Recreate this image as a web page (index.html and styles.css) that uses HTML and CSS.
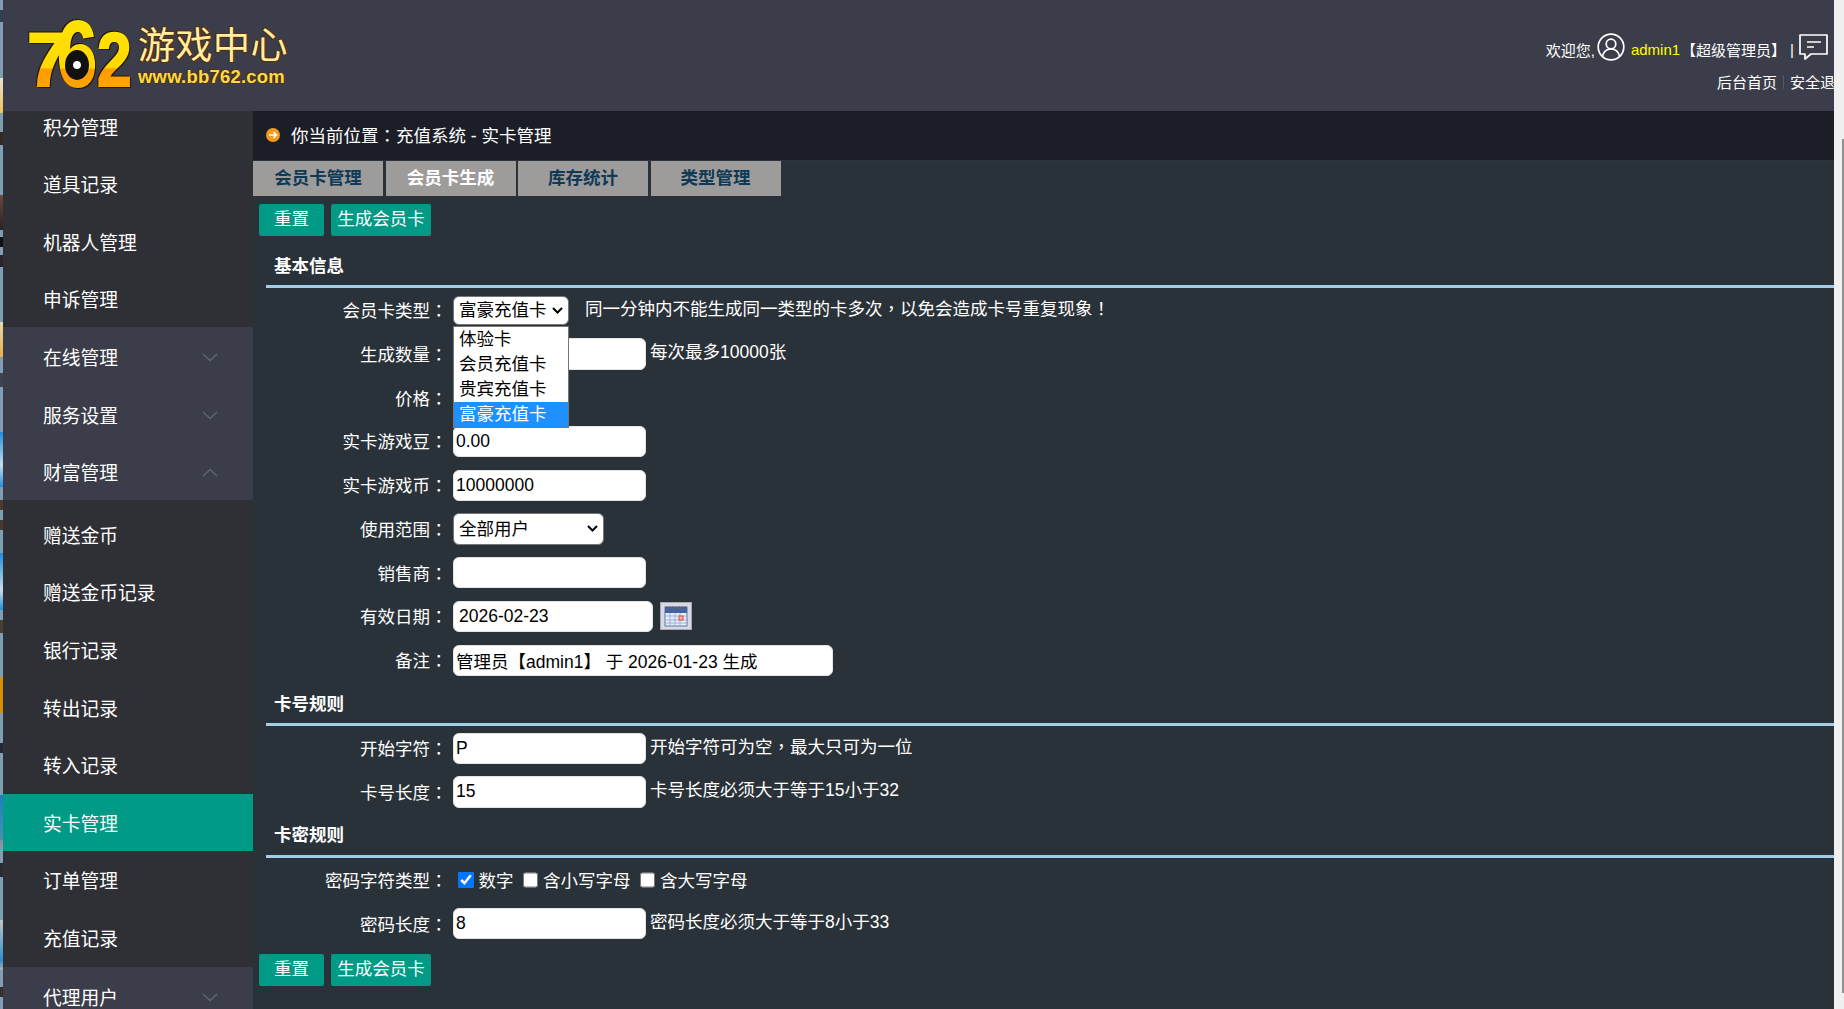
FILE: index.html
```html
<!doctype html>
<html lang="zh-CN">
<head>
    <meta charset="UTF-8">
    <title>实卡管理</title>
    <link rel="stylesheet" href="styles.css">
</head>
<body>
<div class="page">
  <div class="strip"></div>
  <div class="frame">
    <header class="top">
      <div class="logo">
        <div class="logo-num">
          <span class="dig dig-7">7</span><span class="dig dig-6">6</span><span class="dig dig-2">2</span>
          <span class="logo-eye"></span>
        </div>
        <div class="logo-name">
          <div class="logo-cn">游戏中心</div>
          <div class="logo-url">www.bb762.com</div>
        </div>
      </div>
      <div class="user">
        <div class="user-line">
          <span>欢迎您,</span>
          <svg class="user-icon" viewBox="0 0 28 28" fill="none" stroke="#fff" stroke-width="1.7"><circle cx="14" cy="14" r="12.8"/><circle cx="14" cy="11" r="4.8"/><path d="M5.5 23.5c1-5 4.500-7.500 8.500-7.500s7.500 2.500 8.500 7.500"/></svg>
          <span class="user-name">admin1</span>
          <span class="user-role">【超级管理员】</span>
          <span class="user-sep">|</span>
          <svg class="msg-icon" viewBox="0 0 29 27" fill="none" stroke="#fff" stroke-width="1.7"><path d="M1 1h27v19H12l-6 5v-5H1z" stroke-linejoin="round"/><path d="M8 8h14M8 13h7"/></svg>
        </div>
        <div class="user-links">
          <a>后台首页</a>
          <i></i>
          <a>安全退出</a>
        </div>
      </div>
    </header>
    <div class="body">
      <nav class="side">
        <ul class="menu">
          <li class="menu-item up">积分管理</li>
          <li class="menu-item up">道具记录</li>
          <li class="menu-item up">机器人管理</li>
          <li class="menu-item up">申诉管理</li>
          <li class="menu-item up group">在线管理<svg class="chev" viewBox="0 0 16 9"><path d="M1 1l7 6.500L15 1"/></svg></li>
          <li class="menu-item up group">服务设置<svg class="chev" viewBox="0 0 16 9"><path d="M1 1l7 6.500L15 1"/></svg></li>
          <li class="menu-item up group">财富管理<svg class="chev" viewBox="0 0 16 9"><path d="M1 8l7-6.500L15 8"/></svg></li>
          <li class="menu-gap"></li>
          <li class="menu-item">赠送金币</li>
          <li class="menu-item">赠送金币记录</li>
          <li class="menu-item">银行记录</li>
          <li class="menu-item">转出记录</li>
          <li class="menu-item">转入记录</li>
          <li class="menu-item active">实卡管理</li>
          <li class="menu-item">订单管理</li>
          <li class="menu-item">充值记录</li>
          <li class="menu-item up group">代理用户<svg class="chev" viewBox="0 0 16 9"><path d="M1 1l7 6.500L15 1"/></svg></li>
        </ul>
      </nav>
      <main class="main">
        <div class="crumb">
          <svg class="crumb-icon" viewBox="0 0 14 14"><circle cx="7" cy="7" r="7" fill="#f39a1c"/><path d="M3 7h7M7.500 4l3 3-3 3" fill="none" stroke="#fff" stroke-width="1.600"/></svg>
          <span>你当前位置<span class="tw" lang="zh-TW">：</span>充值系统 - 实卡管理</span>
        </div>
        <div class="tabs">
          <a class="tab">会员卡管理</a>
          <a class="tab current">会员卡生成</a>
          <a class="tab">库存统计</a>
          <a class="tab">类型管理</a>
        </div>
        <div class="btns">
          <a class="btn btn-reset">重置</a>
          <a class="btn btn-make">生成会员卡</a>
        </div>

        <h3 class="title title-first">基本信息</h3>
        <div class="row">
          <label class="lab">会员卡类型<span class="tw" lang="zh-TW">：</span></label>
          <div class="pick">
            <select class="sel sel-card"><option>富豪充值卡</option></select>
            <ul class="drop">
              <li>体验卡</li>
              <li>会员充值卡</li>
              <li>贵宾充值卡</li>
              <li class="on">富豪充值卡</li>
            </ul>
          </div>
          <span class="hint hint-far">同一分钟内不能生成同一类型的卡多次<span class="tw" lang="zh-TW">，</span>以免会造成卡号重复现象<span class="tw" lang="zh-TW">！</span></span>
        </div>
        <div class="row">
          <label class="lab">生成数量<span class="tw" lang="zh-TW">：</span></label>
          <input class="txt" type="text">
          <span class="hint">每次最多10000张</span>
        </div>
        <div class="row">
          <label class="lab">价格<span class="tw" lang="zh-TW">：</span></label>
        </div>
        <div class="row">
          <label class="lab">实卡游戏豆<span class="tw" lang="zh-TW">：</span></label>
          <input class="txt" type="text" value="0.00">
        </div>
        <div class="row">
          <label class="lab">实卡游戏币<span class="tw" lang="zh-TW">：</span></label>
          <input class="txt" type="text" value="10000000">
        </div>
        <div class="row">
          <label class="lab">使用范围<span class="tw" lang="zh-TW">：</span></label>
          <select class="sel sel-range"><option>全部用户</option></select>
        </div>
        <div class="row">
          <label class="lab">销售商<span class="tw" lang="zh-TW">：</span></label>
          <input class="txt" type="text">
        </div>
        <div class="row">
          <label class="lab">有效日期<span class="tw" lang="zh-TW">：</span></label>
          <input class="txt txt-date" type="text" value="2026-02-23">
          <span class="cal">
            <svg viewBox="0 0 24 22" width="24" height="22"><rect x="1" y="2" width="22" height="19" fill="#e8eefa" stroke="#5d78a8"/><rect x="1" y="2" width="22" height="6" fill="#45639c"/><path d="M3 1v3M6 1v3M9 1v3M12 1v3M15 1v3M18 1v3M21 1v3" stroke="#666"/><path d="M1 11h22M1 15h22M1 18h22M6 8v13M11 8v13M16 8v13" stroke="#9cb1d6"/><rect x="15" y="11" width="4" height="4" fill="#f4b9a4" stroke="#d9533a"/></svg>
          </span>
        </div>
        <div class="row">
          <label class="lab">备注<span class="tw" lang="zh-TW">：</span></label>
          <input class="txt txt-note" type="text" value="管理员【admin1】 于 2026-01-23 生成">
        </div>

        <h3 class="title">卡号规则</h3>
        <div class="row">
          <label class="lab">开始字符<span class="tw" lang="zh-TW">：</span></label>
          <input class="txt" type="text" value="P">
          <span class="hint">开始字符可为空<span class="tw" lang="zh-TW">，</span>最大只可为一位</span>
        </div>
        <div class="row">
          <label class="lab">卡号长度<span class="tw" lang="zh-TW">：</span></label>
          <input class="txt" type="text" value="15">
          <span class="hint">卡号长度必须大于等于15小于32</span>
        </div>

        <h3 class="title">卡密规则</h3>
        <div class="row">
          <label class="lab">密码字符类型<span class="tw" lang="zh-TW">：</span></label>
          <div class="checks">
            <label class="chk"><input type="checkbox" checked>数字</label>
            <label class="chk"><input type="checkbox">含小写字母</label>
            <label class="chk"><input type="checkbox">含大写字母</label>
          </div>
        </div>
        <div class="row">
          <label class="lab">密码长度<span class="tw" lang="zh-TW">：</span></label>
          <input class="txt" type="text" value="8">
          <span class="hint">密码长度必须大于等于8小于33</span>
        </div>
        <div class="btns btns-end">
          <a class="btn btn-reset">重置</a>
          <a class="btn btn-make">生成会员卡</a>
        </div>
      </main>
    </div>
  </div>
  <div class="scroll"><div class="scroll-thumb"></div></div>
</div>
</body>
</html>
```

FILE: styles.css
```css
* {
  box-sizing: border-box;
}
html, body {
  margin: 0;
  height: 1009px;
  overflow: hidden;
}
body {
  font-family: "Liberation Sans", "Noto Sans CJK SC", sans-serif;
  font-size: 17.5px;
  color: #fff;
  background: #2a3239;
}
ul {
  margin: 0;
  padding: 0;
  list-style: none;
}
.page {
  display: flex;
  height: 1009px;
}
.strip {
  width: 3px;
  flex: none;
  background: linear-gradient(to bottom,
    #7f9db5 0, #7f9db5 10px, #30404f 10px, #30404f 22px, #7f9db5 22px, #7f9db5 78px,
    #e9e3cf 78px, #efc25a 113px, #7f9db5 113px, #7f9db5 132px, #33291f 132px, #33291f 145px,
    #7f9db5 145px, #7f9db5 195px, #6b4a3c 195px, #2a2020 230px, #7f9db5 230px, #7f9db5 237px,
    #111 237px, #111 247px, #7f9db5 247px, #7f9db5 255px, #2b2430 255px, #2b2430 267px,
    #7f9db5 267px, #7f9db5 322px, #e9d9a8 322px, #e5b04a 357px, #7f9db5 357px, #7f9db5 373px,
    #3d4450 373px, #3d4450 387px, #7f9db5 387px, #7f9db5 432px, #1a8fe0 432px, #c9dcea 465px,
    #1a8fe0 487px, #7f9db5 487px, #7f9db5 500px, #4a3a2c 500px, #4a3a2c 510px, #7f9db5 510px,
    #7f9db5 520px, #4a3a2c 520px, #4a3a2c 530px, #7f9db5 530px, #7f9db5 553px, #1a8fe0 553px,
    #c9dcea 590px, #1a8fe0 610px, #7f9db5 610px, #7f9db5 620px, #4a4030 620px, #4a4030 633px,
    #7f9db5 633px, #7f9db5 677px, #d99000 677px, #d99000 713px, #7f9db5 713px, #7f9db5 743px,
    #20283a 743px, #20283a 753px, #7f9db5 753px, #7f9db5 795px, #1a7fc0 795px, #4a90b0 840px,
    #8a8f96 840px, #7f9db5 850px, #7f9db5 863px, #2a2a30 863px, #2a2a30 877px, #7f9db5 877px,
    #7f9db5 920px, #c5c5c5 920px, #2a8fd0 960px, #b0b0b0 970px, #7f9db5 970px, #7f9db5 987px,
    #3a3028 987px, #3a3028 997px, #7f9db5 997px);
}
.frame {
  flex: 1;
  min-width: 0;
  display: flex;
  flex-direction: column;
}
.scroll {
  width: 10px;
  flex: none;
  background: #f0f0f0;
  padding-top: 139px;
}
.scroll-thumb {
  width: 2px;
  height: 854px;
  margin-left: 8px;
  background: #8f8f8f;
}

/* top */
.top {
  height: 111px;
  flex: none;
  display: flex;
  justify-content: space-between;
  background: #3b3e4a;
  overflow: hidden;
}
.logo {
  display: flex;
  align-items: flex-start;
  padding: 8px 0 0 24px;
}
.logo-num {
  position: relative;
  display: flex;
  align-items: baseline;
  width: 111px;
  font-family: "Liberation Sans", sans-serif;
  font-weight: bold;
  line-height: 1;
  filter: drop-shadow(1px 1px 0 #221708) drop-shadow(-1px -1px 0 #221708);
}
.dig {
  display: inline-block;
  transform-origin: left center;
  background: linear-gradient(to bottom, #ffe600 0, #ffd800 60%, #ff9c00 62%, #ffab00 100%);
  -webkit-background-clip: text;
  background-clip: text;
  color: transparent;
  -webkit-text-stroke: 2px transparent;
}
.dig-7 {
  font-size: 76px;
  margin-right: -12px;
}
.dig-6 {
  font-size: 92px;
  margin-right: -11px;
  transform: scaleX(.78);
  background-image: linear-gradient(to bottom, #ffe600 0, #ffd800 65%, #ff9c00 67%, #ffab00 100%);
}
.dig-2 {
  font-size: 76px;
  transform: scaleX(.82);
}
.logo-eye {
  position: absolute;
  left: 38px;
  top: 42px;
  width: 24px;
  height: 30px;
  border-radius: 50%;
  background: radial-gradient(circle at 50% 50%, #fff 0, #fff 3.500px, #111 4.500px);
}
.logo-name {
  padding-top: 18px;
}
.logo-cn {
  font-size: 37px;
  line-height: 41px;
  letter-spacing: 0.500px;
  color: #fff0a0;
  text-shadow: 1px 1px 0 #5a2c10, -1px -1px 0 #5a2c10, 1px -1px 0 #5a2c10, -1px 1px 0 #5a2c10;
}
.logo-url {
  font-size: 18.500px;
  font-weight: bold;
  line-height: 20px;
  letter-spacing: 0.200px;
  color: #f5dc45;
  text-shadow: 1px 1px 0 #5a2c10, -1px -1px 0 #5a2c10;
  white-space: nowrap;
}
.user {
  font-size: 15px;
  padding-top: 33px;
  margin-right: 6px;
}
.user-line {
  display: flex;
  align-items: center;
  justify-content: flex-end;
  height: 28px;
  white-space: nowrap;
}
.user-line span {
  padding-top: 4px;
}
.user-icon {
  width: 28px;
  height: 28px;
  margin-left: 2px;
}
.user-name {
  color: #ff0;
  margin-left: 6px;
}
.user-role {
  margin-left: 1px;
}
.user-sep {
  margin-left: 4px;
}
.msg-icon {
  width: 29px;
  height: 27px;
  margin-left: 5px;
}
.user-links {
  display: flex;
  align-items: center;
  justify-content: flex-end;
  margin-top: 10px;
  margin-right: -22px;
  white-space: nowrap;
}
.user-links i {
  width: 1px;
  height: 14px;
  margin: 0 6px;
  background: #555966;
}

/* left menu */
.body {
  flex: 1;
  min-height: 0;
  display: flex;
}
.side {
  width: 250px;
  flex: none;
  overflow: hidden;
  background: #2e3035;
  font-size: 18.750px;
}
.menu {
  margin-top: -14.400px;
}
.menu-item {
  position: relative;
  height: 57.600px;
  line-height: 62px;
  padding-left: 40px;
  white-space: nowrap;
}
.menu-item.up {
  line-height: 64px;
}
.menu-item.group {
  background: #3b3e4a;
}
.menu-item.active {
  background: #009a87;
}
.menu-gap {
  height: 6px;
}
.chev {
  position: absolute;
  right: 35px;
  top: 26px;
  width: 16px;
  height: 9px;
  fill: none;
  stroke: #5d6472;
  stroke-width: 1.500;
}

/* main */
.main {
  flex: 1;
  min-width: 0;
  background: #2a3239;
  overflow: hidden;
}
.crumb {
  height: 50px;
  display: flex;
  align-items: center;
  gap: 11px;
  padding: 0 0 2px 13px;
  background: #1b1e27;
  border-bottom: 1px solid #2d343c;
  white-space: nowrap;
}
.crumb-icon {
  width: 14px;
  height: 14px;
}
.tw {
  font-family: "Noto Sans CJK TC", sans-serif;
}
.tabs {
  display: flex;
  gap: 2.500px;
}
.tab {
  width: 130px;
  height: 35px;
  line-height: 35px;
  text-align: center;
  font-weight: bold;
  color: #0f3a56;
  background: #9e9b9b;
}
.tab.current {
  color: #fff;
}
.btns {
  display: flex;
  gap: 7px;
  margin: 8px 0 0 6px;
}
.btns-end {
  margin-top: 8px;
}
.btn {
  height: 32px;
  line-height: 31px;
  text-align: center;
  border-radius: 2px;
  background: #009a87;
}
.btn-reset {
  width: 65px;
}
.btn-make {
  width: 100px;
}
.title {
  display: flex;
  align-items: center;
  height: 44.250px;
  margin: 0 0 0 13px;
  padding: 0 0 1px 8px;
  font-size: 17.500px;
  font-weight: bold;
  border-bottom: 3px solid #a3cde8;
}
.title-first {
  margin-top: 8px;
}
.row {
  display: flex;
  align-items: center;
  height: 43.750px;
  white-space: nowrap;
}
.lab {
  width: 194.500px;
  margin: 0 5.500px 1px 0;
  text-align: right;
  flex: none;
}
.txt {
  width: 193px;
  height: 31.250px;
  padding: 0 2px;
  border: 1px solid #e4e4e4;
  border-radius: 6px;
  background: #fff;
  color: #000;
  font: inherit;
  outline: none;
}
.txt-date {
  width: 200px;
  padding-left: 5px;
}
.txt-note {
  width: 380px;
}
.sel {
  height: 32px;
  padding: 0 0 0 5px;
  border: 1px solid #767676;
  border-radius: 6px;
  appearance: none;
  background: #fff url("data:image/svg+xml,%3Csvg xmlns='http://www.w3.org/2000/svg' width='11' height='7'%3E%3Cpath d='M1 1l4.500 4.500L10 1' fill='none' stroke='%23000' stroke-width='2'/%3E%3C/svg%3E") no-repeat right 5px center;
  color: #000;
  font: inherit;
}
.sel-card {
  width: 116px;
  height: 29px;
}
.sel-range {
  width: 151px;
}
.pick {
  position: relative;
  display: flex;
}
.drop {
  position: absolute;
  left: 0;
  top: 30px;
  z-index: 5;
  width: 116px;
  padding: 0;
  border: 1px solid #767676;
  background: #fff;
  color: #000;
}
.drop li {
  height: 25px;
  line-height: 25px;
  padding-left: 5px;
}
.drop .on {
  background: #1e90ff;
  color: #fff;
}
.hint {
  margin: 0 0 6px 4px;
}
.hint-far {
  margin-left: 16px;
}
.cal {
  width: 32px;
  height: 28px;
  margin-left: 7px;
  display: flex;
  align-items: center;
  justify-content: center;
  background: #d9d9e6;
  border: 1px solid #a9a9b8;
}
.checks {
  display: flex;
  gap: 9px;
  padding-left: 5px;
}
.chk {
  display: flex;
  align-items: center;
  gap: 5px;
}
.chk input {
  width: 15.500px;
  height: 15.500px;
  margin: 0;
}
```
